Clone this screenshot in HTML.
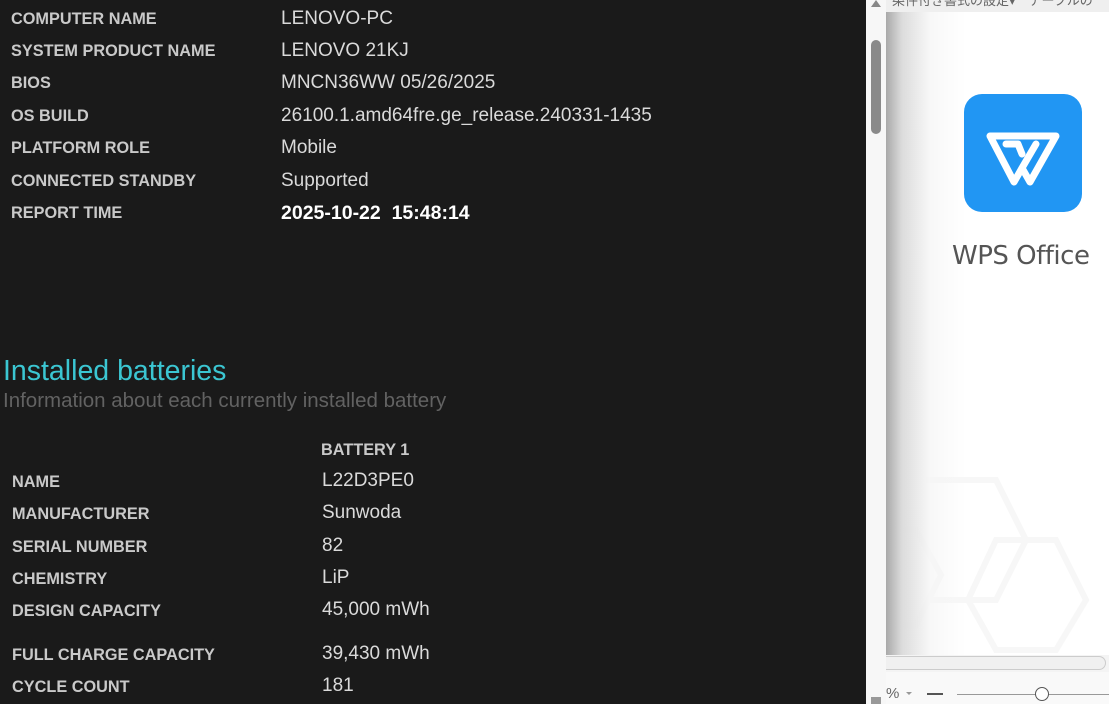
<!DOCTYPE html>
<html><head><meta charset="utf-8"><style>
body{margin:0;width:1109px;height:704px;overflow:hidden;background:#1a1a1a;font-family:"Liberation Sans",sans-serif;position:relative}
.l{position:absolute;color:#c9c9c9;font-weight:bold;font-size:16.3px;white-space:nowrap;line-height:20px}
.v{position:absolute;color:#dadada;font-size:19px;white-space:nowrap;line-height:22px;margin-top:1px}
</style></head><body>
<div class="l" style="left:11px;top:9px">COMPUTER NAME</div><div class="v" style="left:281px;top:7px">LENOVO-PC</div>
<div class="l" style="left:11px;top:41px">SYSTEM PRODUCT NAME</div><div class="v" style="left:281px;top:39px">LENOVO 21KJ</div>
<div class="l" style="left:11px;top:73px">BIOS</div><div class="v" style="left:281px;top:71px">MNCN36WW 05/26/2025</div>
<div class="l" style="left:11px;top:106px">OS BUILD</div><div class="v" style="left:281px;top:104px">26100.1.amd64fre.ge_release.240331-1435</div>
<div class="l" style="left:11px;top:138px">PLATFORM ROLE</div><div class="v" style="left:281px;top:136px">Mobile</div>
<div class="l" style="left:11px;top:171px">CONNECTED STANDBY</div><div class="v" style="left:281px;top:169px">Supported</div>
<div class="l" style="left:11px;top:203px">REPORT TIME</div><div class="v" style="left:281px;top:201px;color:#fff;font-weight:bold;font-size:19.5px">2025-10-22&nbsp; 15:48:14</div>

<div style="position:absolute;left:3px;top:355px;color:#3bc6d2;font-size:28.5px;line-height:32px">Installed batteries</div>
<div style="position:absolute;left:3px;top:389px;color:#626262;font-size:20.5px;line-height:24px">Information about each currently installed battery</div>

<div class="l" style="left:321px;top:440px">BATTERY 1</div>
<div class="l" style="left:12px;top:472px">NAME</div><div class="v" style="left:322px;top:469px">L22D3PE0</div>
<div class="l" style="left:12px;top:504px">MANUFACTURER</div><div class="v" style="left:322px;top:501px">Sunwoda</div>
<div class="l" style="left:12px;top:537px">SERIAL NUMBER</div><div class="v" style="left:322px;top:534px">82</div>
<div class="l" style="left:12px;top:569px">CHEMISTRY</div><div class="v" style="left:322px;top:566px">LiP</div>
<div class="l" style="left:12px;top:601px">DESIGN CAPACITY</div><div class="v" style="left:322px;top:598px">45,000 mWh</div>
<div class="l" style="left:12px;top:645px">FULL CHARGE CAPACITY</div><div class="v" style="left:322px;top:642px">39,430 mWh</div>
<div class="l" style="left:12px;top:677px">CYCLE COUNT</div><div class="v" style="left:322px;top:674px">181</div>

<div style="position:absolute;left:866px;top:0;width:20px;height:704px;background:#f7f7f7"></div>
<div style="position:absolute;left:871px;top:0;width:0;height:0;border-left:5px solid transparent;border-right:5px solid transparent;border-bottom:7px solid #888"></div>
<div style="position:absolute;left:871px;top:40px;width:10px;height:94px;background:#8a8a8a;border-radius:5px"></div>
<div style="position:absolute;left:871px;top:697px;width:10px;height:7px;background:#999"></div>

<div style="position:absolute;left:886px;top:0;width:223px;height:704px;background:#fff"></div>
<div style="position:absolute;left:886px;top:0;width:223px;height:12px;background:#efefef;overflow:hidden"><div style="position:absolute;left:6px;top:-8px;color:#666;font-family:'Noto Sans CJK JP',sans-serif;font-size:13px;line-height:16px;white-space:nowrap">条件付き書式の設定▾　テーブルの</div></div>
<svg style="position:absolute;left:886px;top:460px" width="223" height="195"><g fill="none" stroke="#f7f7f7" stroke-width="6"><path d="M40 20 L110 20 L140 80 L110 140 L40 140"/><path d="M110 80 L170 80 L200 140 L170 190 L110 190 L82 140 Z"/><path d="M0 70 L30 70 L55 115 L30 165 L0 165"/></g></svg>
<div style="position:absolute;left:886px;top:12px;width:80px;height:643px;background:linear-gradient(90deg,#a9a9a9,#dcdcdc 20%,rgba(246,246,246,.8) 55%,rgba(255,255,255,0))"></div>
<div style="position:absolute;left:964px;top:94px;width:118px;height:118px;background:#2196f3;border-radius:18px"></div>
<svg style="position:absolute;left:964px;top:94px" width="118" height="118"><path d="M26 42 L92 42 L66 88 L58 74 L72 50 M26 42 L50 88 L58 74 M42 50 L54 50 L58 60" fill="none" stroke="#fff" stroke-width="7" stroke-linejoin="round" stroke-linecap="round"/></svg>
<div style="position:absolute;left:952px;top:238px;color:#555;font-family:'DejaVu Sans',sans-serif;font-size:26px;line-height:36px;white-space:nowrap;letter-spacing:-0.5px">WPS Office</div>
<div style="position:absolute;left:886px;top:655px;width:223px;height:17px;background:#f4f4f4"></div>
<div style="position:absolute;left:886px;top:656px;width:220px;height:14px;background:#f0f0f0;border:1px solid #ccc;border-left:none;border-radius:0 7px 7px 0;box-sizing:border-box"></div>
<div style="position:absolute;left:886px;top:672px;width:223px;height:32px;background:#f9f9f9"></div>
<div style="position:absolute;left:886px;top:685px;color:#666;font-size:15px;line-height:18px">%</div>
<div style="position:absolute;left:906px;top:692px;width:0;height:0;border-left:3px solid transparent;border-right:3px solid transparent;border-top:3px solid #999"></div>
<div style="position:absolute;left:927px;top:693px;width:16px;height:2px;background:#555"></div>
<div style="position:absolute;left:957px;top:694px;width:152px;height:1px;background:#999"></div>
<div style="position:absolute;left:1035px;top:687px;width:12px;height:12px;border:1.5px solid #555;border-radius:50%;background:#fff"></div>
</body></html>
